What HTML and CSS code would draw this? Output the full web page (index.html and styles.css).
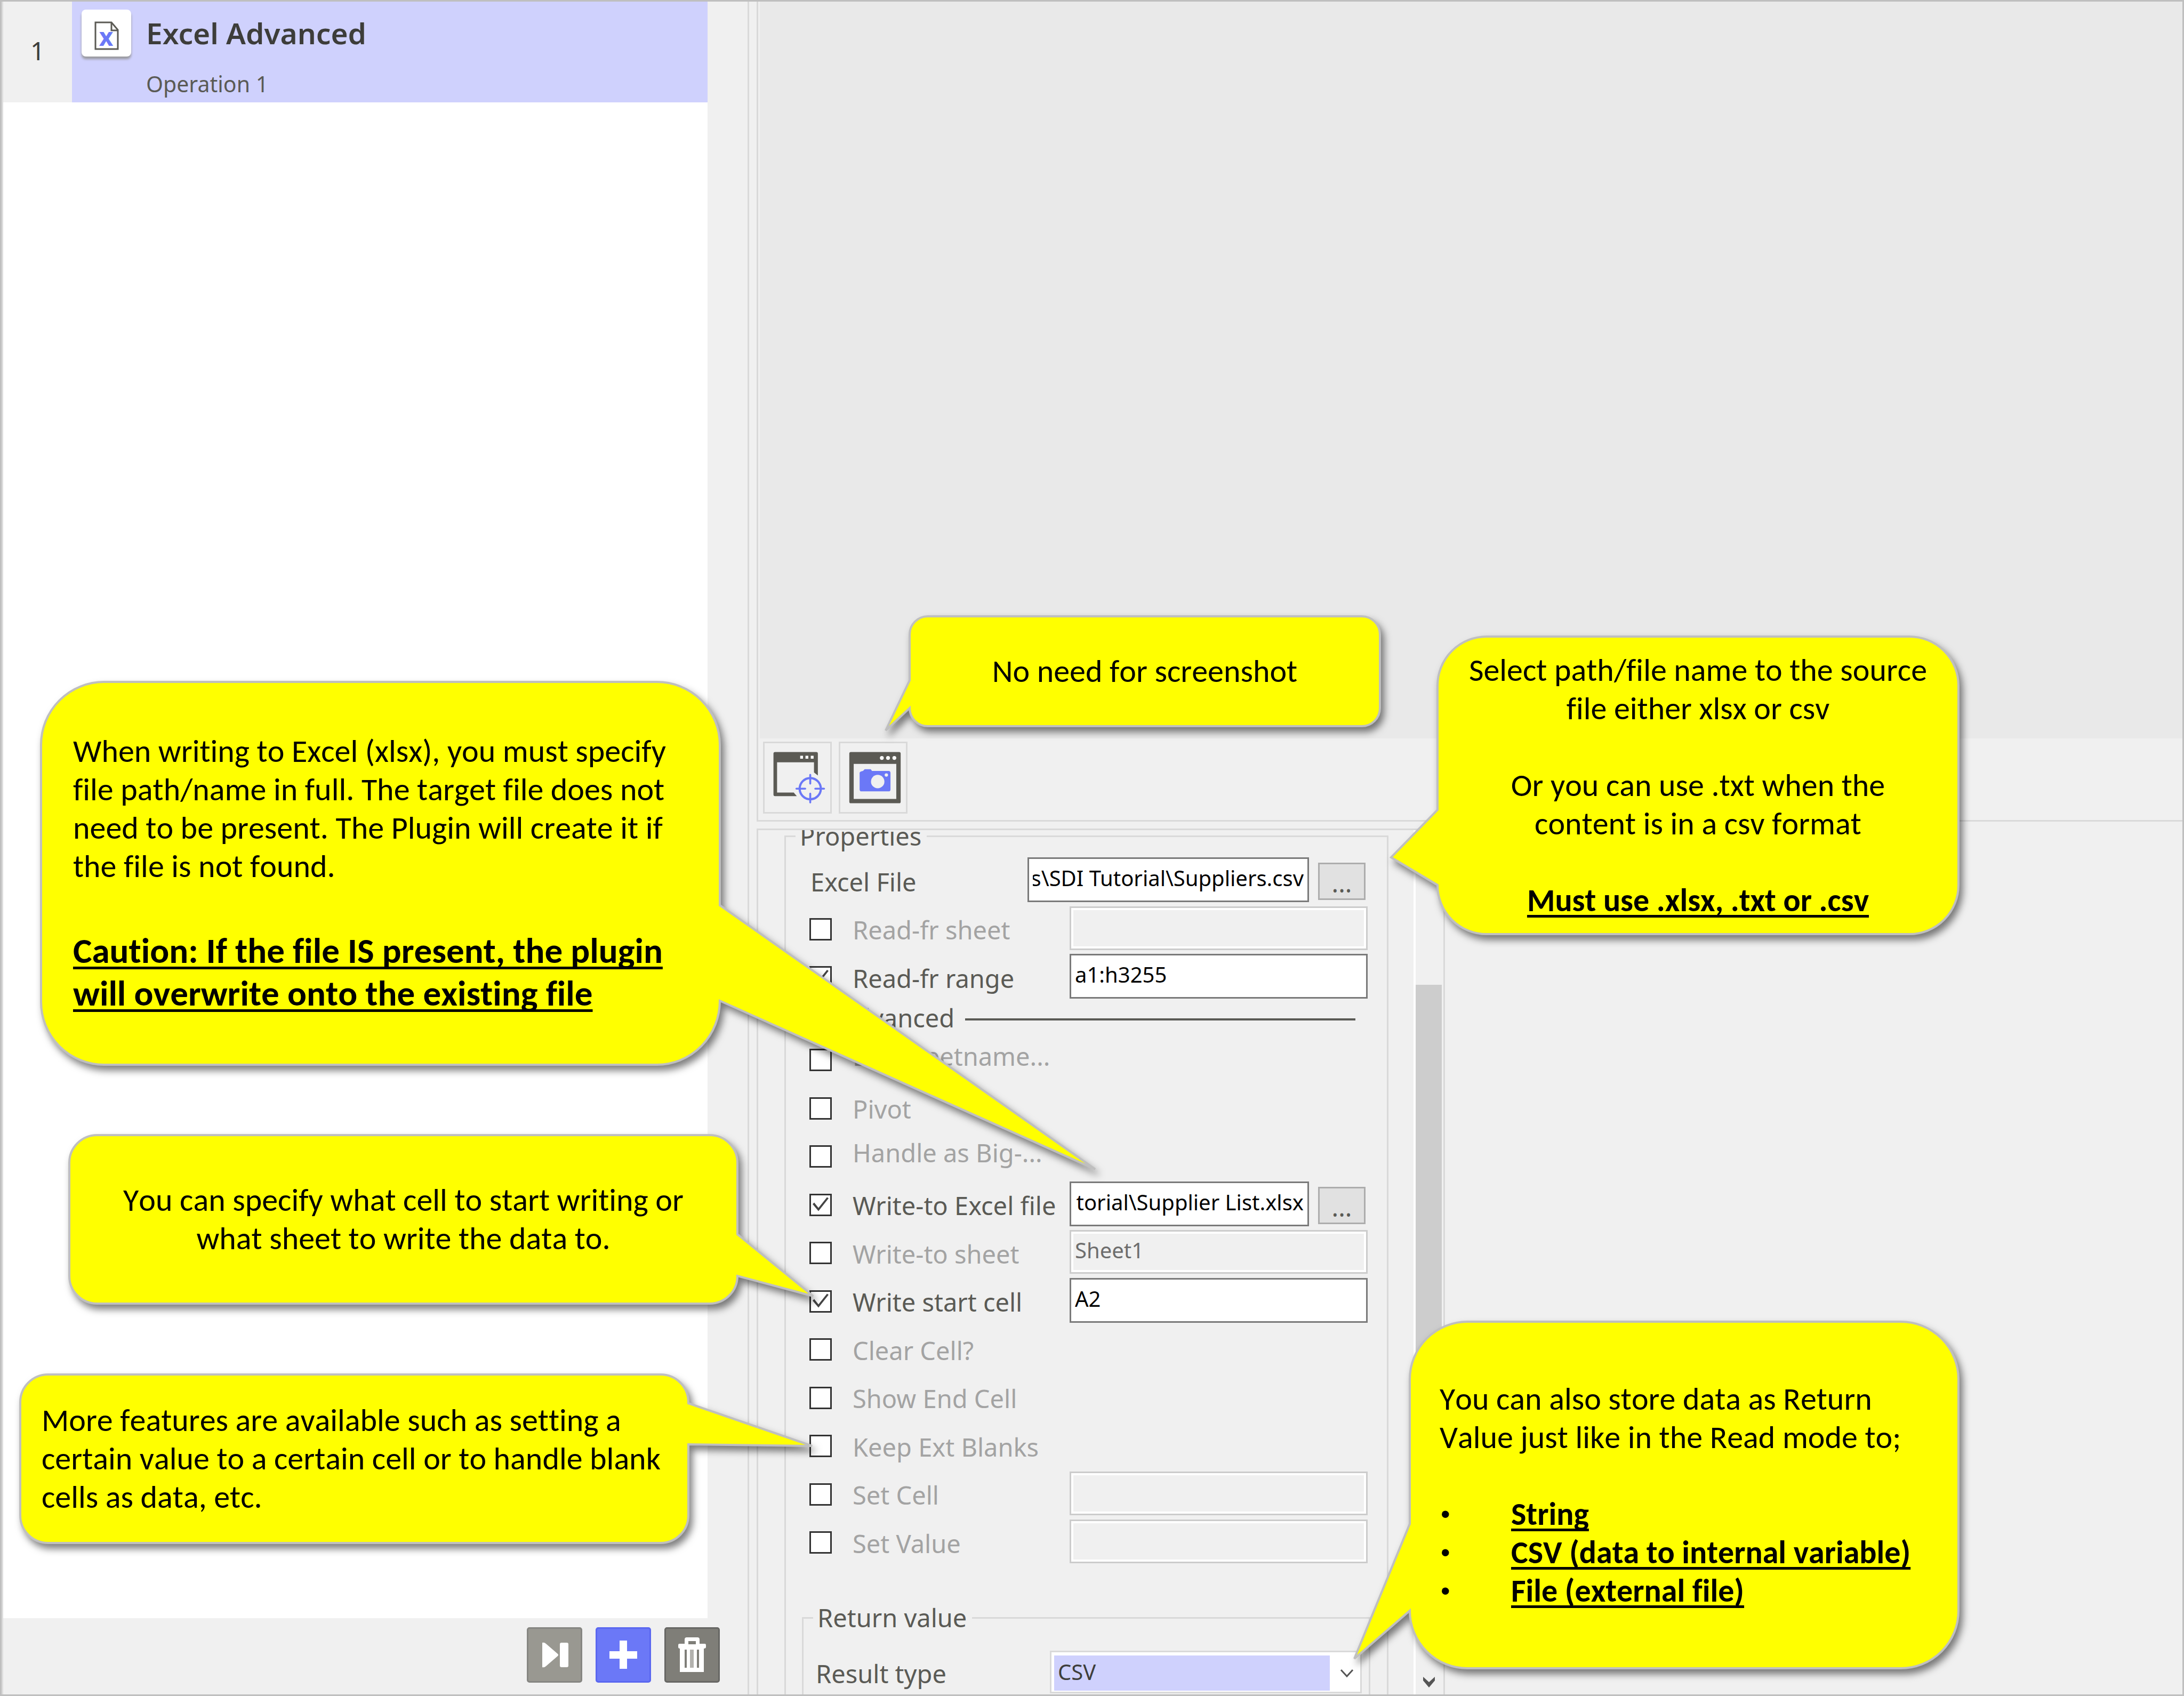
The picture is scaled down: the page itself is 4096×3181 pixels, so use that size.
FILE: index.html
```html
<!DOCTYPE html>
<html lang="en">
<head>
<meta charset="utf-8">
<title>Excel Advanced</title>
<link rel="stylesheet" href="styles.css">
</head>
<body>
<div class="window">
  <aside class="operations">
    <ol class="operation-list">
      <li class="operation">
        <span class="operation-number">1</span>
        <div class="operation-card">
          <span class="operation-icon">
            <svg viewBox="0 0 93 88" width="93" height="88" aria-hidden="true">
              <path d="M26 24H56L68 38V74H26Z" fill="#fff" stroke="#5b5a54" stroke-width="3"/>
              <path d="M56 24V39H68" fill="none" stroke="#5b5a54" stroke-width="3"/>
              <text x="46" y="68" text-anchor="middle" class="icon-letter">x</text>
            </svg>
          </span>
          <div class="operation-text">
            <h2 class="operation-title">Excel Advanced</h2>
            <p class="operation-name">Operation 1</p>
          </div>
        </div>
      </li>
    </ol>
    <div class="operation-actions">
      <button type="button" class="action action-skip" aria-label="Skip">
        <svg viewBox="3 3 98 98" width="98" height="98"><path d="M29 29Q33 28 36 31L58 50Q60 52 58 54L36 73Q33 76 29 75Z" fill="#fff"/><rect x="62" y="29" width="16" height="46" rx="3" fill="#fff"/></svg>
      </button>
      <button type="button" class="action action-add" aria-label="Add">
        <svg viewBox="3 3 98 98" width="98" height="98"><path d="M45 25H59V45H78V59H59V78H45V59H26V45H45Z" fill="#fff"/></svg>
      </button>
      <button type="button" class="action action-delete" aria-label="Delete">
        <svg viewBox="3 3 98 98" width="98" height="98"><path fill="#fff" fill-rule="evenodd" d="M38 31V23Q38 19 42 19H62Q66 19 66 23V31H76Q78 31 78 34V37Q78 40 74 40V84H29V40Q26 40 26 37V34Q26 31 28 31ZM45 26V32H59V26ZM38 42V76H42V42ZM61 42V76H65V42Z"/><path d="M48 42H55V76H48Z" fill="#b3b2ae"/></svg>
      </button>
    </div>
  </aside>

  <main class="workspace">
    <section class="capture">
      <div class="canvas"></div>
      <div class="toolbar">
        <button type="button" class="tool" aria-label="Select target">
          <svg viewBox="12 12 505 533" width="123" height="129">
            <path fill="#5b5a54" fill-rule="evenodd" d="M91 80H411Q423 80 423 92V262L393 238V160H107V394H236L260 422H91Q79 422 79 410V92Q79 80 91 80Z"/>
            <path fill="#fff" d="M286 109H308V132H286ZM327 109H349V132H327ZM368 109H390V132H368Z"/>
            <circle cx="364" cy="364" r="82" fill="none" stroke="#6b78f7" stroke-width="17"/>
            <path d="M364 257V325M364 403V471M257 364H325M403 364H471" stroke="#6b78f7" stroke-width="15" stroke-linecap="round"/>
          </svg>
        </button>
        <button type="button" class="tool" aria-label="Take screenshot">
          <svg viewBox="12 12 505 533" width="123" height="129">
            <path fill="#5b5a54" fill-rule="evenodd" d="M92 80H466Q478 80 478 92V465Q478 477 466 477H92Q80 477 80 465V92Q80 80 92 80ZM114 172V444H444V172Z"/>
            <g fill="#fff"><circle cx="332" cy="126" r="15"/><circle cx="380" cy="126" r="15"/><circle cx="429" cy="126" r="15"/></g>
            <path fill="#6b78f7" d="M160 240Q164 230 186 227L199 213H246L256 227H385Q399 228 399 242V370Q399 385 384 385H175Q160 385 160 370Z"/>
            <circle cx="300" cy="309" r="52" fill="#f0f0f0"/><circle cx="367" cy="258" r="13" fill="#f0f0f0"/>
          </svg>
        </button>
      </div>
    </section>

    <section class="properties">
      <form class="properties-content">
        <fieldset class="group">
          <legend>Properties</legend>
          <div class="rows">
            <div class="row">
              <label class="name name-plain" for="excel-file">Excel File</label>
              <input class="field path" id="excel-file" type="text" value="C:\Tutorials\SDI Tutorial\Suppliers.csv">
              <button type="button" class="browse">...</button>
            </div>
            <div class="row">
              <input type="checkbox" class="tick" id="read-sheet">
              <label class="name off" for="read-sheet">Read-fr sheet</label>
              <input class="field" type="text" aria-label="Read-fr sheet value" disabled>
            </div>
            <div class="row">
              <input type="checkbox" class="tick" id="read-range" checked>
              <label class="name" for="read-range">Read-fr range</label>
              <input class="field" type="text" aria-label="Read-fr range value" value="a1:h3255">
            </div>
          </div>
          <div class="divider"><span>Advanced</span><hr></div>
          <div class="rows">
            <div class="row">
              <input type="checkbox" class="tick" id="sheetname">
              <label class="name off cut" for="sheetname">Del sheetname...</label>
            </div>
            <div class="row">
              <input type="checkbox" class="tick" id="pivot">
              <label class="name off" for="pivot">Pivot</label>
            </div>
            <div class="row">
              <input type="checkbox" class="tick" id="big">
              <label class="name off cut" for="big">Handle as Big-...</label>
            </div>
            <div class="row">
              <input type="checkbox" class="tick" id="write-file" checked>
              <label class="name" for="write-file">Write-to Excel file</label>
              <input class="field path" type="text" aria-label="Write-to Excel file path" value="C:\SDI Tutorial\Supplier List.xlsx">
              <button type="button" class="browse">...</button>
            </div>
            <div class="row">
              <input type="checkbox" class="tick" id="write-sheet">
              <label class="name off" for="write-sheet">Write-to sheet</label>
              <input class="field" type="text" aria-label="Write-to sheet value" value="Sheet1" disabled>
            </div>
            <div class="row">
              <input type="checkbox" class="tick" id="start-cell" checked>
              <label class="name" for="start-cell">Write start cell</label>
              <input class="field" type="text" aria-label="Write start cell value" value="A2">
            </div>
            <div class="row">
              <input type="checkbox" class="tick" id="clear-cell">
              <label class="name off" for="clear-cell">Clear Cell?</label>
            </div>
            <div class="row">
              <input type="checkbox" class="tick" id="end-cell">
              <label class="name off" for="end-cell">Show End Cell</label>
            </div>
            <div class="row">
              <input type="checkbox" class="tick" id="blanks">
              <label class="name off" for="blanks">Keep Ext Blanks</label>
            </div>
            <div class="row">
              <input type="checkbox" class="tick" id="set-cell">
              <label class="name off" for="set-cell">Set Cell</label>
              <input class="field" type="text" aria-label="Set Cell value" disabled>
            </div>
            <div class="row">
              <input type="checkbox" class="tick" id="set-value">
              <label class="name off" for="set-value">Set Value</label>
              <input class="field" type="text" aria-label="Set Value value" disabled>
            </div>
          </div>
          <fieldset class="group group-inner">
            <legend>Return value</legend>
            <div class="row row-result">
              <label class="name name-result" for="result-type">Result type</label>
              <div class="select-box">
                <select id="result-type"><option>CSV</option><option>String</option><option>File</option></select>
                <svg class="select-arrow" viewBox="0 0 26 18" width="26" height="18" aria-hidden="true"><path d="M2 3L13 15L24 3" fill="none" stroke="#555" stroke-width="3"/></svg>
              </div>
            </div>
          </fieldset>
        </fieldset>
      </form>
      <div class="scrollbar" aria-hidden="true">
        <div class="scrollbar-thumb"></div>
        <svg class="scrollbar-arrow" viewBox="0 0 26 24" width="26" height="24"><path d="M2 2L13 12L24 2V9L13 22L2 9Z" fill="#555"/></svg>
      </div>
    </section>
  </main>

  <div class="callout callout-screenshot">
    <svg class="callout-shape" viewBox="0 0 882 206" aria-hidden="true"><path d="M34 0H848A34 34 0 0 1 882 34V172A34 34 0 0 1 848 206H34A34 34 0 0 1 0 172L-45 214L0 120V34A34 34 0 0 1 34 0Z"/></svg>
    <p>No need for screenshot</p>
  </div>

  <div class="callout callout-source">
    <svg class="callout-shape" viewBox="0 0 977 558" aria-hidden="true"><path d="M92 0H885A92 92 0 0 1 977 92V466A92 92 0 0 1 885 558H92A92 92 0 0 1 0 466L-87 414L0 325V92A92 92 0 0 1 92 0Z"/></svg>
    <p>Select path/file name to the source<br>file either xlsx or csv</p>
    <p>Or you can use .txt when the<br>content is in a csv format</p>
    <p><strong>Must use .xlsx, .txt or .csv</strong></p>
  </div>

  <div class="callout callout-write">
    <svg class="callout-shape" viewBox="0 0 1273 718" aria-hidden="true"><path d="M118 0H1155A118 118 0 0 1 1273 118V419L1977 914L1273 598A118 120 0 0 1 1155 718H118A118 118 0 0 1 0 600V118A118 118 0 0 1 118 0Z"/></svg>
    <p>When writing to Excel (xlsx), you must specify file path/name in full. The target file does not need to be present. The Plugin will create it if the file is not found.</p>
    <p class="caution"><strong>Caution: If the file IS present, the plugin will overwrite onto the existing file</strong></p>
  </div>

  <div class="callout callout-cell">
    <svg class="callout-shape" viewBox="0 0 1253 316" aria-hidden="true"><path d="M52 0H1201A52 52 0 0 1 1253 52V186L1395 302L1253 264A52 52 0 0 1 1201 316H52A52 52 0 0 1 0 264V52A52 52 0 0 1 52 0Z"/></svg>
    <p>You can specify what cell to start writing or what sheet to write the data to.</p>
  </div>

  <div class="callout callout-features">
    <svg class="callout-shape" viewBox="0 0 1253 316" aria-hidden="true"><path d="M52 0H1201A52 52 0 0 1 1253 52V54L1485 134L1253 131V264A52 52 0 0 1 1201 316H52A52 52 0 0 1 0 264V52A52 52 0 0 1 52 0Z"/></svg>
    <p>More features are available such as setting a certain value to a certain cell or to handle blank cells as data, etc.</p>
  </div>

  <div class="callout callout-return">
    <svg class="callout-shape" viewBox="0 0 1029 650" aria-hidden="true"><path d="M108 0H921A108 108 0 0 1 1029 108V542A108 108 0 0 1 921 650H108A108 108 0 0 1 0 542L-104 632L0 379V108A108 108 0 0 1 108 0Z"/></svg>
    <p>You can also store data as Return Value just like in the Read mode to;</p>
    <ul>
      <li><strong>String</strong></li>
      <li><strong>CSV (data to internal variable)</strong></li>
      <li><strong>File (external file)</strong></li>
    </ul>
  </div>
</div>
</body>
</html>
```
FILE: styles.css
```css
* { box-sizing: border-box; }

body {
  margin: 0;
  background: #f0f0f0;
  color: #5a5a55;
  font-family: "Noto Sans", sans-serif;
  font-size: 47px;
}

h2, p, ol, ul { margin: 0; padding: 0; }
button, input, select { font-family: inherit; margin: 0; }
button svg { display: block; }

.window {
  position: relative;
  display: flex;
  height: 100vh;
  overflow: hidden;
  border: 3px solid #bfbfbf;
}

/* Operation list */
.operations {
  flex: 0 0 1402px;
  display: flex;
  flex-direction: column;
  border-left: 3px solid #dcdcdc;
  border-right: 3px solid #d9d9d9;
}
.operation-list {
  flex: 1;
  margin-right: 75px;
  background: #fff;
  list-style: none;
}
.operation { display: flex; height: 189px; }
.operation-number {
  flex: 0 0 129px;
  display: flex;
  align-items: center;
  justify-content: center;
  padding-bottom: 6px;
  background: #f0f0f0;
  color: #3d3d3a;
}
.operation-card {
  flex: 1;
  display: flex;
  align-items: flex-start;
  gap: 28px;
  padding: 15px 18px 0;
  background: #cfd1fd;
}
.operation-icon {
  height: 88px;
  border-radius: 8px;
  background: #fff;
  box-shadow: 0 5px 4px #9a9aa0;
}
.icon-letter { font-size: 46px; font-weight: 700; fill: #6b78f7; }
.operation-text { padding-top: 7px; }
.operation-title { font-size: 55px; line-height: 74px; font-weight: 600; color: #3d3d3a; }
.operation-name { margin-top: 31px; font-size: 41px; line-height: 54px; }

.operation-actions {
  display: flex;
  justify-content: flex-end;
  gap: 25px;
  padding: 17px 52px 22px 0;
}
.action {
  padding: 0;
  width: 104px;
  height: 104px;
  border: 3px solid;
  border-radius: 5px;
}
.action-skip { background: #999891; border-color: #868682; }
.action-add { background: #6b78f7; border-color: #5a67f0; }
.action-delete { background: #7f7e78; border-color: #676764; }

/* Workspace */
.workspace {
  flex: 1;
  min-width: 0;
  display: flex;
  flex-direction: column;
  gap: 13px;
  padding-left: 14px;
}
.capture {
  display: flex;
  flex-direction: column;
  border-left: 3px solid #d9d9d9;
  border-bottom: 3px solid #d9d9d9;
  height: 1538px;
  padding-left: 3px;
}
.canvas { flex: 1; background: #e9e9e9; }
.toolbar { display: flex; gap: 13px; padding: 6px 6px 12px; }
.tool {
  width: 129px;
  height: 135px;
  padding: 0;
  border: 3px solid #d9d9d9;
  background: #f0f0f0;
}

/* Properties pane */
.properties {
  flex: 1;
  min-height: 0;
  width: 1291px;
  display: flex;
  overflow: hidden;
  border: 3px solid #d9d9d9;
  border-bottom: 0;
}
.properties-content { flex: 1; min-width: 0; padding: 0 47px 0 49px; }
.group {
  min-width: 0;
  margin: -20px 0 0;
  padding: 0 0 100px;
  border: 3px solid #d9d9d9;
}
.group-inner { margin: 67px 31px 0 30px; }
legend { margin-left: 18px; padding: 0 10px 0 8px; line-height: 62px; }

.rows { padding: 0 36px 0 44px; }
legend + .rows { padding-top: 6px; }
.row { display: flex; align-items: center; height: 90px; }
.row:nth-child(even) { height: 91px; }
.name { flex: 0 0 409px; padding: 7px 0 0 2px; line-height: 62px; }
.name-result { flex-basis: 441px; }
.off { color: #a3a3a3; }
.cut { padding: 0 0 11px 2px; }
.divider { display: flex; align-items: center; gap: 20px; height: 65px; padding: 0 59px 0 100px; }
.divider hr { flex: 1; margin: 6px 0 0; border: 0; height: 4px; background: #5a5a55; }

.tick {
  appearance: none;
  flex: none;
  width: 42px;
  height: 42px;
  margin: 4px 37px 0 0;
  border: 3px solid #333;
  background: #fff;
}
.tick:checked::before {
  content: "";
  display: block;
  width: 36px;
  height: 36px;
  background: #444;
  clip-path: polygon(3px 17px, 6px 14px, 14px 24px, 30px 4px, 33px 6px, 14px 30px);
}
.field {
  flex: 1;
  min-width: 0;
  height: 84px;
  padding: 0 7px 7px;
  border: 3px solid #7a7a7a;
  background: #fff;
  color: #000;
  font-size: 40px;
}
.field:disabled {
  height: 82px;
  border-color: #ccc;
  background: #f0f0f0;
  box-shadow: inset 0 0 0 4px #fff;
  color: #6d6d6d;
}
.path { direction: rtl; }
.browse {
  flex: none;
  width: 89px;
  height: 70px;
  margin: 6px 4px 0 17px;
  padding: 6px 0 0;
  border: 3px solid #adadad;
  background: #e1e1e1;
  color: #5a5a55;
  font-size: 47px;
  line-height: 58px;
}

.row-result { margin-top: 25px; padding: 0 13px 0 21px; }
.select-box { position: relative; flex: 1; }
.select-box select {
  appearance: none;
  display: block;
  width: 100%;
  height: 80px;
  padding: 0 70px 0 12px;
  border: 3px solid #d9d9d9;
  border-radius: 0;
  background: linear-gradient(#cfd1fd, #cfd1fd) 5px 6px / 517px 66px no-repeat #fff;
  color: #3d3d3a;
  font-size: 40px;
}
.select-arrow { position: absolute; right: 15px; top: 33px; pointer-events: none; }

.scrollbar {
  flex: 0 0 56px;
  display: flex;
  flex-direction: column;
  align-items: center;
  padding: 290px 3px 11px 0;
  border-left: 4px solid #fff;
}
.scrollbar-thumb { width: 49px; height: 1050px; background: #cdcdcd; }
.scrollbar-arrow { margin-top: auto; }

/* Annotations pinned over the window */
.callout {
  position: absolute;
  display: flex;
  flex-direction: column;
  justify-content: center;
  gap: 72px;
  color: #000;
  font-family: Carlito, Calibri, sans-serif;
  font-size: 60px;
  line-height: 72px;
  font-kerning: none;
  font-variant-ligatures: none;
}
.callout-shape { position: absolute; inset: 0; width: 100%; height: 100%; overflow: visible; filter: drop-shadow(6px 9px 7px rgba(0, 0, 0, .5)); }
.callout-shape path { fill: #ff0; stroke: #bfbfbf; stroke-width: 4px; }
.callout p, .callout ul { position: relative; }
.callout strong {
  text-decoration: underline 5px;
  text-underline-offset: 7px;
  text-decoration-skip-ink: none;
}
.callout ul { list-style: none; }
.callout li { display: flex; }
.callout li::before { content: "•"; flex: 0 0 132px; padding-left: 2px; font-family: "Liberation Sans", sans-serif; font-size: 50px; }
.callout .caution { font-size: 67px; line-height: 80px; }

.callout-screenshot { left: 1703px; top: 1153px; width: 882px; height: 206px; text-align: center; }
.callout-source { left: 2693px; top: 1191px; width: 977px; height: 558px; text-align: center; }
.callout-write { left: 74px; top: 1276px; width: 1273px; height: 718px; padding: 0 60px; gap: 82px; }
.callout-cell { left: 127px; top: 2126px; width: 1253px; height: 316px; padding: 0 90px; text-align: center; }
.callout-features { left: 35px; top: 2575px; width: 1253px; height: 316px; padding: 0 20px 0 40px; }
.callout-return { left: 2641px; top: 2476px; width: 1029px; height: 650px; padding: 0 56px; }
```
